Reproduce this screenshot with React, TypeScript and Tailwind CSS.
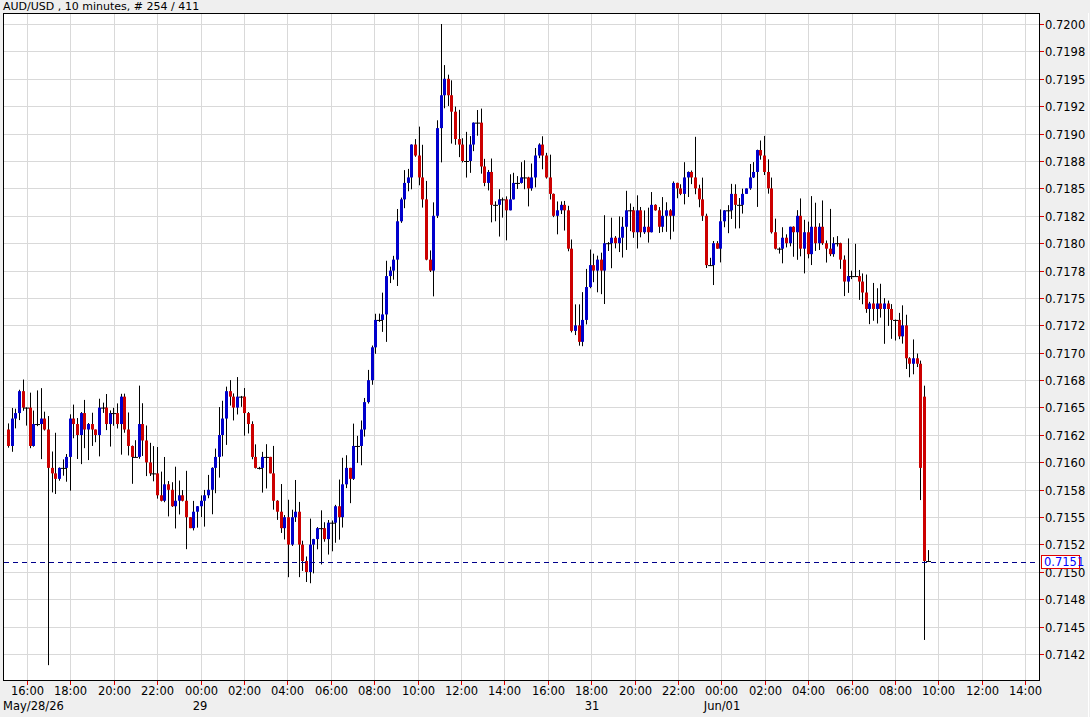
import React from "react";

const Y = (p: number) => 24 + (0.72 - p) * 109600;
const priceLabels = ["0.7200","0.7198","0.7195","0.7192","0.7190","0.7188","0.7185","0.7182","0.7180","0.7178","0.7175","0.7172","0.7170","0.7168","0.7165","0.7162","0.7160","0.7158","0.7155","0.7152","0.7150","0.7148","0.7145","0.7142"];
const timeLabels = ["16:00","18:00","20:00","22:00","00:00","02:00","04:00","06:00","08:00","10:00","12:00","14:00","16:00","18:00","20:00","22:00","00:00","02:00","04:00","06:00","08:00","10:00","12:00","14:00"];
const tx = (i: number) => 27 + i * 43.4;

const keys: [number, number][] = [
  [8,.7163],[17,.7166],[30,.7163],[45,.7163],[49,.7157],[60,.716],[70,.7163],[100,.7164],[120,.7165],[128,.716],[140,.7163],[160,.7157],[180,.7156],[200,.7155],[215,.7162],[225,.7166],[240,.7165],[255,.716],[270,.716],[280,.7153],[295,.7155],[305,.7151],[320,.7154],[340,.7156],[360,.7163],[375,.7172],[390,.7177],[400,.7183],[410,.7188],[420,.7186],[430,.7176],[437,.719],[442,.7196],[450,.7192],[465,.7187],[475,.719],[490,.7185],[505,.7184],[520,.7185],[540,.7188],[550,.7184],[567,.7182],[570,.7171],[580,.7172],[590,.7177],[610,.718],[630,.7182],[650,.7182],[680,.7185],[690,.7187],[700,.7185],[706,.7178],[720,.7181],[740,.7185],[760,.7188],[775,.7179],[790,.7182],[805,.718],[820,.7181],[835,.7179],[850,.7177],[860,.7175],[880,.7175],[895,.7173],[905,.7171],[915,.7169],[919,.7166],[923,.7151],[930,.7151]];

function interp(x: number) {
  for (let k = 1; k < keys.length; k++) {
    if (x <= keys[k][0]) {
      const [x0, p0] = keys[k - 1], [x1, p1] = keys[k];
      return p0 + ((p1 - p0) * (x - x0)) / (x1 - x0);
    }
  }
  return keys[keys.length - 1][1];
}

let seed = 11;
const rnd = () => { seed = (seed * 16807) % 2147483647; return seed / 2147483647; };

type C = { x: number; o: number; c: number; h: number; l: number };
const candles: C[] = [];
let prev = 0.7163;
for (let i = 0; i < 254; i++) {
  const x = 8 + i * 3.635;
  let c = interp(x) + (rnd() - 0.5) * 0.0003;
  c = Math.round(c * 20000) / 20000;
  let o = prev;
  const big = x > 920.5 && x < 924.5;
  if (big) { o = 0.7166; c = 0.7151; }
  let h = Math.max(o, c) + rnd() * rnd() * 0.0004;
  let l = Math.min(o, c) - rnd() * rnd() * 0.0004;
  if (Math.abs(x - 49) < 2) l = 0.71415;
  if (big) { l = 0.71438; h = 0.7167; }
  if (i === 253) { o = 0.7151; c = 0.7151; h = 0.7152; l = 0.7151; }
  if (Math.abs(x - 442) < 2) h = 0.72;
  candles.push({ x, o, c, h, l });
  prev = c;
}

export default function App() {
  return (
    <div className="w-[1090px] h-[717px] bg-[#efefef] flex flex-col overflow-hidden" style={{ fontFamily: '"DejaVu Sans", "Liberation Sans", sans-serif' }}>
      <div className="h-[13px] pl-[3px] text-[11px] leading-[13px] text-black">AUD/USD , 10 minutes, # 254 / 411</div>
      <svg width="1090" height="704" className="block">
        <g transform="translate(0,-13)" fontFamily='"DejaVu Sans", "Liberation Sans", sans-serif' fontSize="11.5">
          <rect x="3.5" y="13.5" width="1036" height="667" fill="#fff" stroke="#000" />
          {priceLabels.map((p, i) => {
            const y = Math.round(24 + i * 27.39) + 0.5;
            return (
              <g key={p}>
                <line x1="4" x2="1039" y1={y} y2={y} stroke="#d9d9d9" />
                <line x1="1040" x2="1044" y1={y} y2={y} stroke="#e00000" />
                <text x="1045" y={y + 4} fill="#000">{p}</text>
              </g>
            );
          })}
          {timeLabels.map((t, i) => {
            const x = Math.round(tx(i)) + 0.5;
            return (
              <g key={i}>
                <line x1={x} x2={x} y1="14" y2="680" stroke="#d9d9d9" />
                <line x1={x} x2={x} y1="681" y2="685" stroke="#e00000" />
                <text x={x} y="695" textAnchor="middle" fill="#000">{t}</text>
              </g>
            );
          })}
          <text x="3" y="710" fill="#000">May/28/26</text>
          <text x="200" y="710" textAnchor="middle" fill="#000">29</text>
          <text x="592" y="710" textAnchor="middle" fill="#000">31</text>
          <text x="722" y="710" textAnchor="middle" fill="#000">Jun/01</text>
          {candles.map((c, i) => {
            const cx = Math.round(c.x);
            const up = c.c > c.o, down = c.c < c.o;
            const top = Y(Math.max(c.o, c.c)), bot = Y(Math.min(c.o, c.c));
            return (
              <g key={i}>
                <line x1={cx + 0.5} x2={cx + 0.5} y1={Y(c.h)} y2={Y(c.l)} stroke="#000" />
                {up || down ? (
                  <rect x={cx - 1} y={top} width="3" height={Math.max(1, bot - top)} fill={up ? "#0000cc" : "#cc0000"} />
                ) : (
                  <line x1={cx - 2} x2={cx + 3} y1={top + 0.5} y2={top + 0.5} stroke="#000" />
                )}
              </g>
            );
          })}
          <line x1="4" x2="1039" y1="562.5" y2="562.5" stroke="#00008b" strokeDasharray="5 4" />
          <rect x="1041.5" y="555.5" width="38" height="13" fill="#fff" stroke="#e00000" />
          <text x="1044" y="566" fill="#0000ff">0.7151</text>
          <line x1="1088.5" x2="1088.5" y1="13" y2="717" stroke="#fff" />
        </g>
      </svg>
    </div>
  );
}
